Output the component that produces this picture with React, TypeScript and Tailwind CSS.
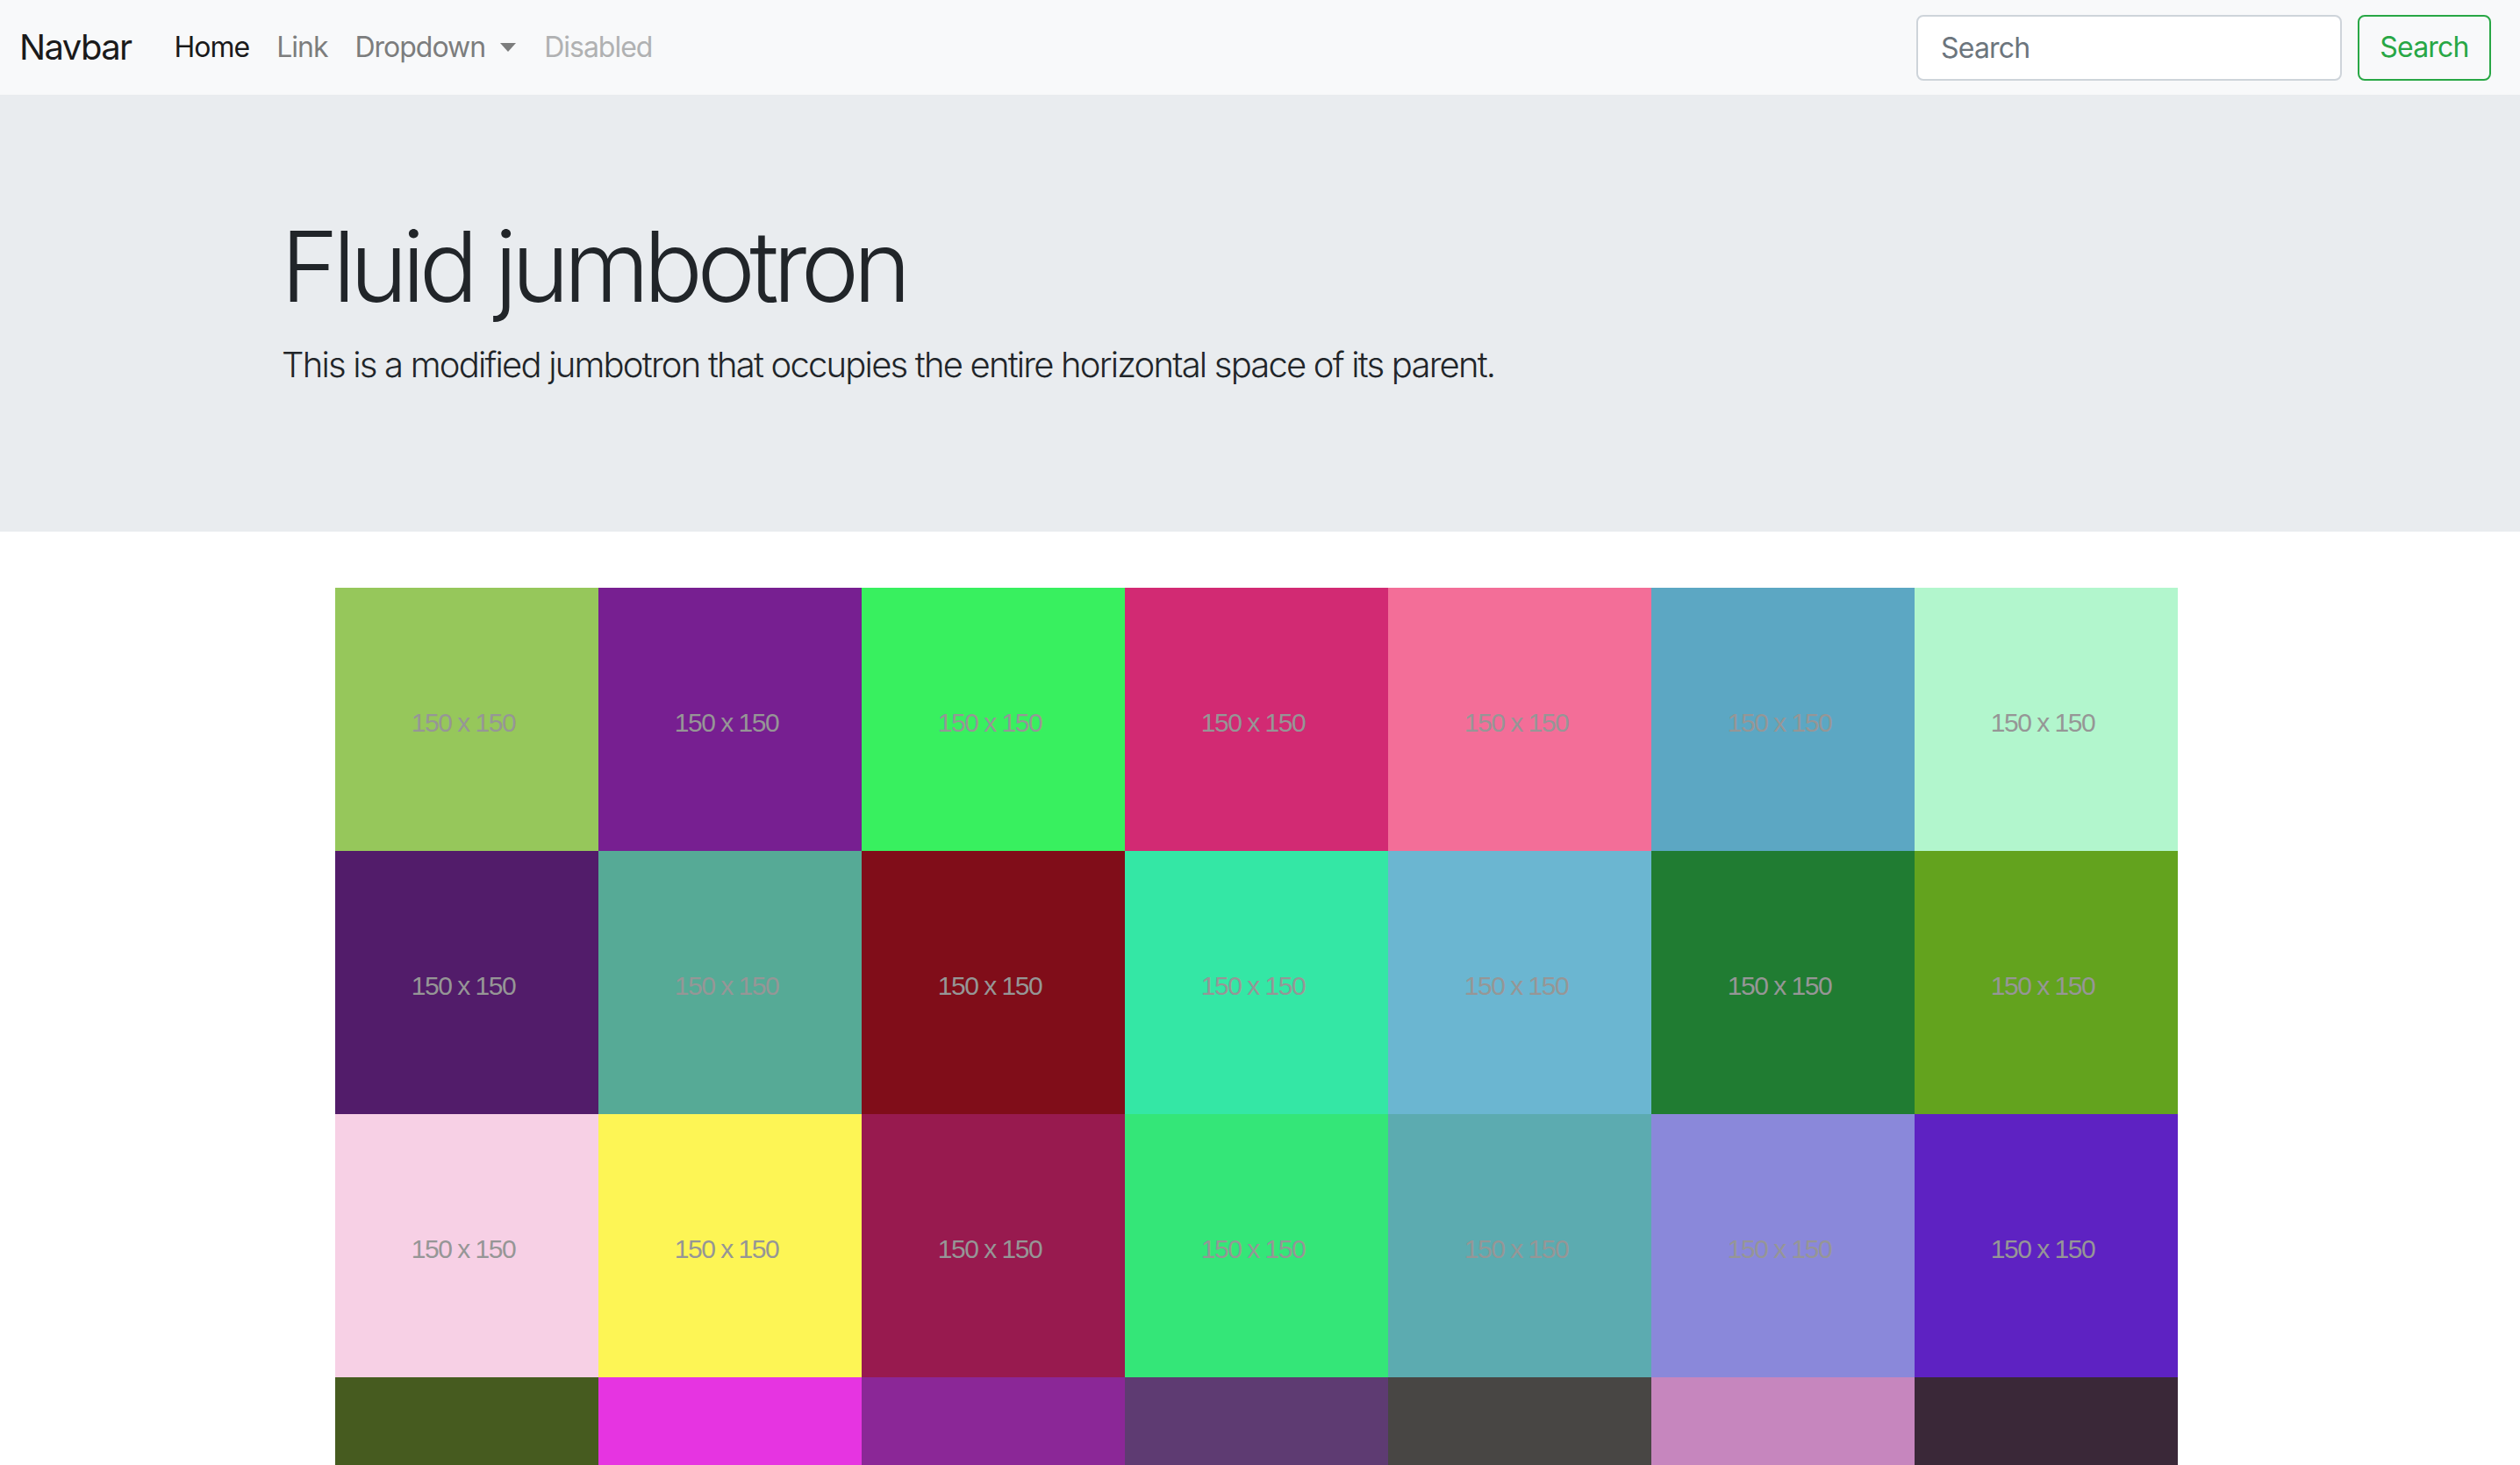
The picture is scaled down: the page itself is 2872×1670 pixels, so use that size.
const rows: string[][] = [
  ["#96c75b", "#771f91", "#38f05f", "#d22a73", "#f36e98", "#5ca7c3", "#b2f6cd"],
  ["#521c6a", "#56aa96", "#800d19", "#34e7a5", "#6bb6d1", "#207c32", "#63a31e"],
  ["#f7d0e5", "#fdf555", "#981a4f", "#34e678", "#5cabb0", "#8a88da", "#5e22c2"],
  ["#465b1f", "#e634e1", "#8b2797", "#5e3b72", "#484644", "#c686be", "#3a2838"],
];

function Navbar() {
  return (
    <nav className="flex h-[108px] items-center bg-[#f8f9fa] pl-[22px] pr-[33px]">
      <a className="mr-[33px] text-[40px] leading-none tracking-[-1.6px] text-[#1a1a1a]">Navbar</a>
      <ul className="flex items-center text-[32px] leading-none tracking-[-1px]">
        <li className="px-[16px] text-[#1a1a1a]">Home</li>
        <li className="px-[15px] text-[#7c7d7d]">Link</li>
        <li className="flex items-center px-[16px] text-[#7c7d7d]">
          Dropdown
          <span className="ml-[17px] h-0 w-0 border-x-[9px] border-t-[10px] border-x-transparent border-t-[#7c7d7d]" />
        </li>
        <li className="px-[16px] text-[#b0b1b2]">Disabled</li>
      </ul>
      <form className="ml-auto flex items-center gap-[18px]">
        <input
          placeholder="Search"
          className="h-[75px] w-[485px] rounded-[8px] border-2 border-[#ced4da] bg-white px-[26px] text-[32px] tracking-[-0.8px] text-[#495057] outline-none placeholder:text-[#6c757d]"
        />
        <button
          type="button"
          className="h-[75px] w-[152px] rounded-[8px] border-2 border-[#28a745] text-[32px] tracking-[-0.8px] text-[#28a745]"
        >
          Search
        </button>
      </form>
    </nav>
  );
}

function Jumbotron() {
  return (
    <div className="bg-[#e9ecef] py-[128px]">
      <div className="mx-auto w-[2280px] px-[30px]">
        <h1 className="mb-[16px] -ml-[6px] text-[112px] font-light leading-[1.2] tracking-[-6.6px] text-[#212529]">
          Fluid jumbotron
        </h1>
        <p className="mb-[32px] -ml-[5px] text-[40px] font-light leading-[1.5] tracking-[-1.8px] text-[#212529]">
          This is a modified jumbotron that occupies the entire horizontal space of its parent.
        </p>
      </div>
    </div>
  );
}

export default function App() {
  return (
    <div className="min-h-screen bg-white font-['Inter','Noto_Sans',sans-serif]">
      <Navbar />
      <Jumbotron />
      <div className="mx-auto mt-[64px] w-[2280px] px-[30px]">
        <div className="ml-[56px] grid w-[2100px] grid-cols-7">
          {rows.map((row, r) =>
            row.map((c, i) => (
              <div
                key={r + "-" + i}
                className="flex h-[300px] items-center justify-center pr-[8px] pt-[6px] font-['Liberation_Sans',Arial,sans-serif] text-[30px] tracking-[-1.5px] text-[#969696]"
                style={{ backgroundColor: c }}
              >
                {r < 3 ? "150 x 150" : null}
              </div>
            ))
          )}
        </div>
      </div>
    </div>
  );
}
